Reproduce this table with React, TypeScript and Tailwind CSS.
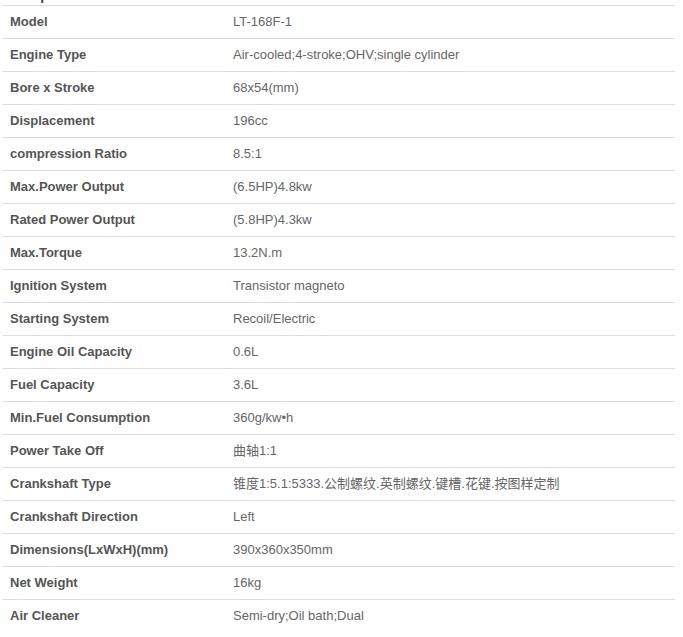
import * as React from "react";

const specs: [string, string][] = [
  ["Model", "LT-168F-1"],
  ["Engine Type", "Air-cooled;4-stroke;OHV;single cylinder"],
  ["Bore x Stroke", "68x54(mm)"],
  ["Displacement", "196cc"],
  ["compression Ratio", "8.5:1"],
  ["Max.Power Output", "(6.5HP)4.8kw"],
  ["Rated Power Output", "(5.8HP)4.3kw"],
  ["Max.Torque", "13.2N.m"],
  ["Ignition System", "Transistor magneto"],
  ["Starting System", "Recoil/Electric"],
  ["Engine Oil Capacity", "0.6L"],
  ["Fuel Capacity", "3.6L"],
  ["Min.Fuel Consumption", "360g/kw•h"],
  ["Power Take Off", "曲轴1:1"],
  ["Crankshaft Type", "锥度1:5.1:5333.公制螺纹.英制螺纹.键槽.花键.按图样定制"],
  ["Crankshaft Direction", "Left"],
  ["Dimensions(LxWxH)(mm)", "390x360x350mm"],
  ["Net Weight", "16kg"],
  ["Air Cleaner", "Semi-dry;Oil bath;Dual"],
];

const App: React.FC = () => {
  return (
    <div className="bg-white w-[683px] h-[637px] overflow-hidden font-['Liberation_Sans','Noto_Sans_CJK_SC',sans-serif]">
      <div className="h-[5px] overflow-hidden relative">
        <h3 className="absolute left-[31px] -top-[13px] text-[14px] leading-[16px] font-bold text-[#444]">
          Specifications
        </h3>
      </div>
      <div className="ml-[3px] w-[672px]">
        {specs.map(([label, value]) => (
          <div
            key={label}
            className="grid grid-cols-[223px_1fr] h-[33px] border-t border-[#dddddd] items-center text-[13px]"
          >
            <div className="px-[7px] font-bold text-[#555555]">{label}</div>
            <div className="px-[7px] text-[#666666]">{value}</div>
          </div>
        ))}
      </div>
    </div>
  );
};

export default App;
